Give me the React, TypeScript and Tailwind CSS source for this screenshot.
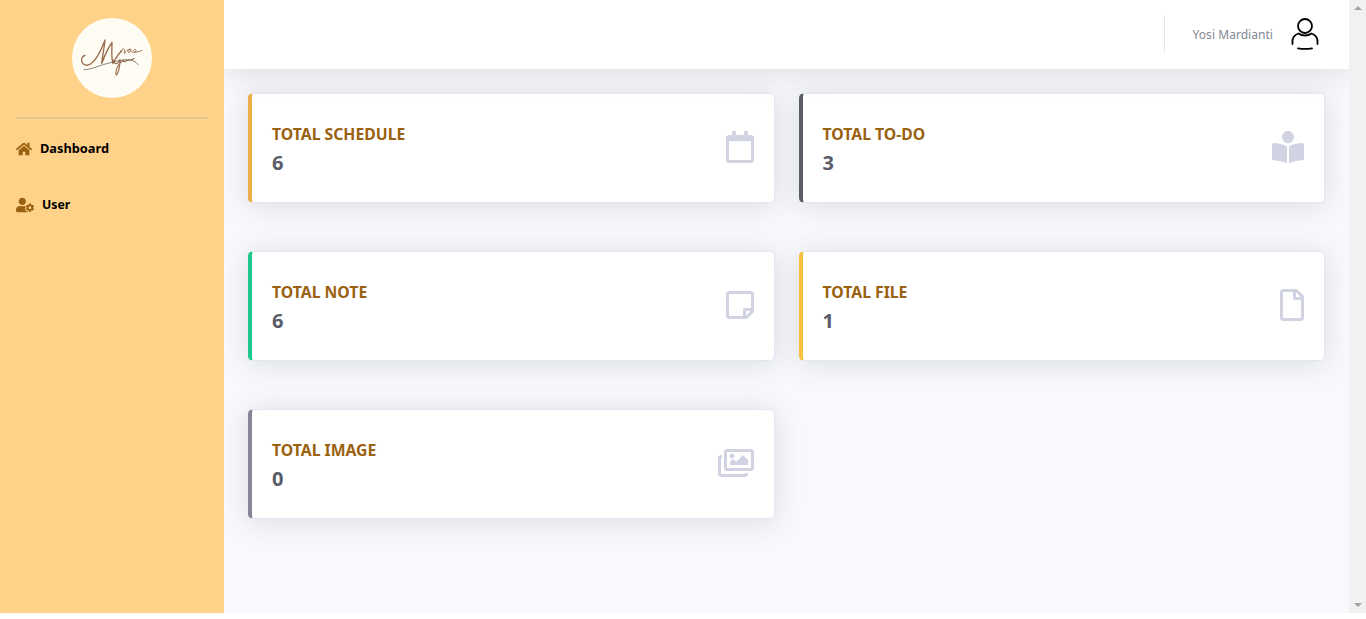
import React from "react";
import { FaHome, FaUserCog, FaRegCalendar, FaBookReader, FaRegStickyNote, FaRegFile, FaRegImages } from "react-icons/fa";

const font = "font-['Noto_Sans','Open_Sans',sans-serif]";

const stats = [
  { title: "TOTAL SCHEDULE", value: "6", accent: "border-l-[#eeae47]", Icon: FaRegCalendar, iconWidth: "w-7" },
  { title: "TOTAL TO-DO", value: "3", accent: "border-l-[#5a5c69]", Icon: FaBookReader, iconWidth: "w-8" },
  { title: "TOTAL NOTE", value: "6", accent: "border-l-[#1cc88a]", Icon: FaRegStickyNote, iconWidth: "w-7" },
  { title: "TOTAL FILE", value: "1", accent: "border-l-[#f6c23e]", Icon: FaRegFile, iconWidth: "w-6" },
  { title: "TOTAL IMAGE", value: "0", accent: "border-l-[#858796]", Icon: FaRegImages, iconWidth: "w-9" },
];

function Logo() {
  return (
    <div className="w-20 h-20 rounded-full bg-[#fffcf3] flex items-center justify-center">
      <svg width="64" height="40" viewBox="0 0 64 40" fill="none" stroke="#96684c" strokeLinecap="round" strokeLinejoin="round">
        {/* signature strokes */}
        <path strokeWidth="1.3" d="M5 17.500C2.500 18 1 20.500 1.700 23.300 2.500 27 6.500 28.500 10.500 26 16 22.500 21 13 25 2 24.500 8 22.500 18 21.700 25.500 24.500 18 28 10 32 4.500 32 11 31 19 33 25.500 35.500 20.500 38.500 15.500 41.700 13" />
        <path strokeWidth=".9" d="M40.500 14C41 11.500 43.500 10 44.500 11.500 44.500 13 44 15 44.500 15.500 46 13 48 11 50 11.500 51 12.500 50 14.500 48.500 14.500 47.500 13.500 48.500 11 50.500 11 52 15 53 15.500 56 13.500 56.500 11.500 54.500 10.500 53.500 12.500 53.500 14.500 57 14.500 62 12.500" />
        <path strokeWidth="1.100" d="M33.500 22C34 25 35.500 26 37 25.500 38.500 25 39.500 22.500 40 21.500 40 27 38.500 34 36.700 37 35.500 37.500 35.500 32 38 28 40.500 24.500 42.500 22.500 43.500 22 43 24 44.500 24.500 46.500 22.500 49 22.500 52 22 54 20.500" />
        <path stroke="#6d6259" strokeWidth=".8" strokeDasharray="2.500 .6" d="M4 31.700C10 31.500 16 29 23 26.700 31 24.500 39 22 46.700 21.700 52 21.500 56 23.500 58 26.700" />
      </svg>
    </div>
  );
}

function UserIcon() {
  return (
    <svg width="30" height="34" viewBox="0 0 30 34" fill="none" stroke="#000" strokeWidth="1.800" strokeLinecap="round">
      <circle cx="15" cy="10" r="7" />
      <path d="M2.500 28C1.500 22.500 4.500 18.500 8.500 17.500 10.500 19 12.500 19.500 15 19.500 17.500 19.500 19.500 19 21.500 17.500 25.500 18.500 28.500 22.500 27.500 28" />
      <path d="M8 32.400C12 33 18 33 22 32.400" strokeWidth="1.800" />
    </svg>
  );
}

function StatCard({ title, value, accent, Icon, iconWidth }: (typeof stats)[number]) {
  return (
    <div className={`h-[110px] bg-white rounded-[5px] border border-[#e3e6f0] border-l-4 ${accent} shadow-[0_2.400px_28px_0_rgba(58,59,69,0.15)] flex items-center justify-between px-5`}>
      <div className="pt-1">
        <div className="text-[#9a6110] text-[15.750px] font-bold leading-[24px]">{title}</div>
        <div className="text-[#5a5c69] text-[20px] font-bold leading-[30px] mt-[2px]">{value}</div>
      </div>
      <Icon className={`h-8 ${iconWidth} text-[#d1d3e2] mb-[2px]`} />
    </div>
  );
}

export default function App() {
  return (
    <div className={`${font} w-full h-[619px] bg-white overflow-hidden`}>
      <div className="h-[613px] flex">
        <aside className="relative z-10 w-[224px] shrink-0 bg-[#ffd28a] px-4 pt-[18px]">
          <div className="flex justify-center">
            <Logo />
          </div>
          <hr className="mt-[19px] border-t-2 border-[#e6c48e]" />
          <div className="mt-5 flex items-center h-5 gap-2">
            <FaHome className="text-[16px] text-[#9a6110]" />
            <span className="text-[12.800px] font-bold text-black">Dashboard</span>
          </div>
          <div className="mt-9 flex items-center h-5 gap-2">
            <FaUserCog className="text-[18px] text-[#9a6110]" />
            <span className="text-[12.300px] font-bold text-black">User</span>
          </div>
        </aside>

        <div className="flex-1 min-w-0 bg-[#f8f9fc] flex flex-col">
          <header className="relative h-[69px] bg-white shadow-[0_2.400px_28px_0_rgba(58,59,69,0.15)] flex items-center justify-end pr-[29px]">
            <div className="w-px h-[38px] bg-[#e3e6f0] mb-[1px]" />
            <span className="ml-7 mt-[1px] text-[12.100px] text-[#858796]">Yosi Mardianti</span>
            <div className="ml-[17px] mb-[3px]">
              <UserIcon />
            </div>
          </header>
          <main className="grid grid-cols-2 gap-x-6 gap-y-12 px-6 pt-6">
            {stats.map((s) => (
              <StatCard key={s.title} {...s} />
            ))}
          </main>
        </div>

        <div className="relative z-10 w-[17px] shrink-0 bg-[#f1f1f1] flex flex-col items-center justify-between py-[6px]">
          <div className="w-0 h-0 border-x-[4px] border-x-transparent border-b-[4px] border-b-[#a3a3a3]" />
          <div className="w-0 h-0 border-x-[4px] border-x-transparent border-t-[4px] border-t-[#a3a3a3]" />
        </div>
      </div>
    </div>
  );
}
